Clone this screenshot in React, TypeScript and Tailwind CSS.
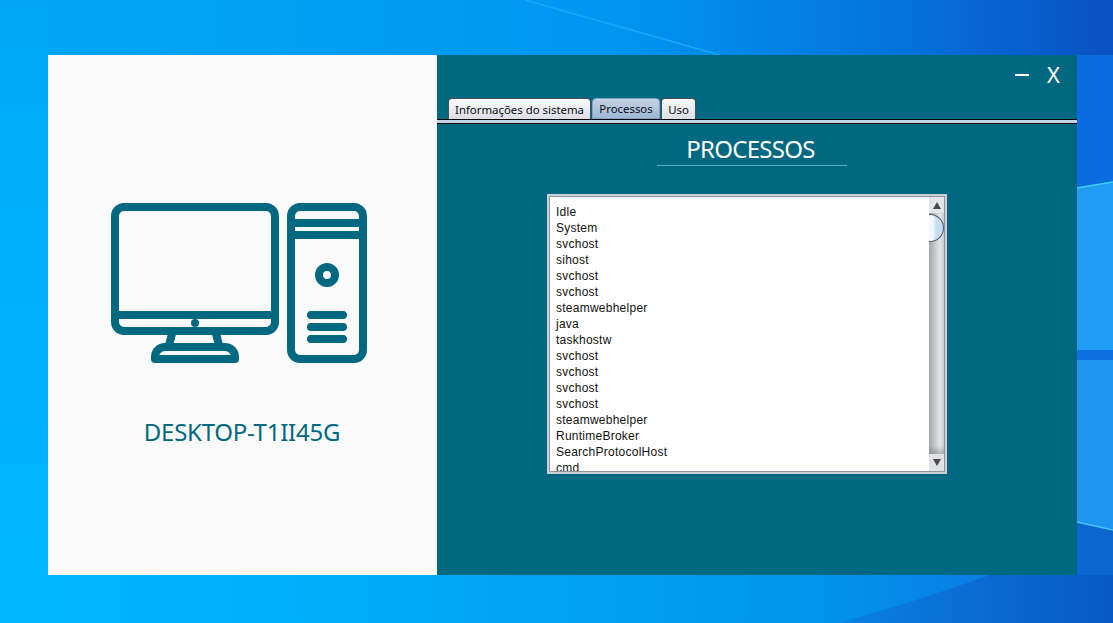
const processes = [
  'Idle',
  'System',
  'svchost',
  'sihost',
  'svchost',
  'svchost',
  'steamwebhelper',
  'java',
  'taskhostw',
  'svchost',
  'svchost',
  'svchost',
  'svchost',
  'steamwebhelper',
  'RuntimeBroker',
  'SearchProtocolHost',
  'cmd',
];

function Wallpaper() {
  return (
    <svg className="absolute inset-0" width="1113" height="623" viewBox="0 0 1113 623">
      <defs>
        <linearGradient id="top" x1="0" y1="0" x2="1" y2="0">
          <stop offset="0" stopColor="#00a8f6" />
          <stop offset="0.55" stopColor="#0096f2" />
          <stop offset="0.8" stopColor="#0574de" />
          <stop offset="1" stopColor="#0a50c4" />
        </linearGradient>
        <linearGradient id="bottom" x1="0" y1="0" x2="1" y2="0">
          <stop offset="0" stopColor="#00b8ff" />
          <stop offset="0.4" stopColor="#00a8f8" />
          <stop offset="0.72" stopColor="#0096ee" />
          <stop offset="0.88" stopColor="#0a7ee6" />
          <stop offset="1" stopColor="#0a6cd8" />
        </linearGradient>
        <linearGradient id="left" x1="0" y1="0" x2="0" y2="1">
          <stop offset="0" stopColor="#00a8f6" />
          <stop offset="1" stopColor="#00b8ff" />
        </linearGradient>
        <linearGradient id="corner" x1="0" y1="0" x2="1" y2="0">
          <stop offset="0" stopColor="#0a80e4" />
          <stop offset="1" stopColor="#0858c4" />
        </linearGradient>
      </defs>
      <rect width="1113" height="623" fill="url(#top)" />
      <rect y="575" width="1113" height="48" fill="url(#bottom)" />
      <rect width="48" height="623" fill="url(#left)" />
      <polygon points="1077,55 1113,55 1113,182 1077,188" fill="#0b6ce0" />
      <polygon points="1077,188 1113,182 1113,350 1077,350" fill="#1f9cf4" />
      <polygon points="1077,350 1113,350 1113,360 1077,360" fill="#0b6fe0" />
      <polygon points="1077,360 1113,360 1113,530 1077,522" fill="#2095f0" />
      <polygon points="1077,522 1113,530 1113,623 1077,623" fill="#0b66d2" />
      <path d="M 840 623 Q 920 600 990 575 H 1113 V 623 Z" fill="url(#corner)" />
      <line x1="525" y1="0" x2="720" y2="55" stroke="#1ea6fb" strokeWidth="1.5" />
      <line x1="1077" y1="188" x2="1113" y2="182" stroke="#3fd0f8" strokeWidth="1.5" />
      <line x1="1077" y1="522" x2="1113" y2="530" stroke="#3fc4f8" strokeWidth="1.5" />
    </svg>
  );
}

function ComputerIcon() {
  return (
    <svg width="256" height="160" viewBox="0 0 256 160" fill="none" stroke="#006880" strokeWidth="8" className="mr-[7px]">
      <rect x="4" y="4" width="160" height="124" rx="9" />
      <line x1="4" y1="112" x2="164" y2="112" />
      <circle cx="84" cy="120" r="4" fill="#006880" stroke="none" />
      <path d="M 61 131 L 58 142 M 105 131 L 108 142" />
      <path d="M 44 156 V 154 A 10 10 0 0 1 54 144 H 114 A 10 10 0 0 1 124 154 V 156 Z" strokeLinejoin="round" />
      <rect x="180" y="4" width="72" height="152" rx="9" />
      <line x1="180" y1="20" x2="252" y2="20" />
      <line x1="180" y1="32" x2="252" y2="32" />
      <circle cx="216" cy="72" r="8" />
      <path d="M 200 112 H 232 M 200 124 H 232 M 200 136 H 232" strokeLinecap="round" />
    </svg>
  );
}

function ProcessList() {
  return (
    <div className="flex h-[280px] w-[400px] border-2 border-[#ccd0d6]">
      <div className="flex min-w-0 flex-1 border border-[#8f96a0] bg-white">
        <ul className="flex-1 overflow-hidden pl-[6px] pt-[7px] font-['Liberation_Sans',sans-serif] text-[12px] leading-[16px] tracking-[0.25px] text-[#111111]">
          {processes.map((name, i) => (
            <li key={i}>{name}</li>
          ))}
        </ul>
        <div className="relative flex w-[15px] flex-col bg-[linear-gradient(90deg,#a2a4a8,#cfd0d3_50%,#e4e5e7_75%,#c8c9cc)]">
          <div className="flex h-[16px] items-center justify-center bg-[#e3e5e8]">
            <div className="h-0 w-0 border-x-[4px] border-b-[7px] border-x-transparent border-b-[#4a4a4a]" />
          </div>
          <div className="absolute left-0 top-[17px] h-[28px] w-[15px] rounded-r-[14px] border border-l-0 border-[#4a6078] bg-[linear-gradient(90deg,#f2f7fb,#f2f7fb_30%,#c6deef_50%)]" />
          <div className="flex-1" />
          <div className="h-[8px] bg-[linear-gradient(#0000,#6a6c7066)]" />
          <div className="flex h-[17px] items-center justify-center bg-[#e0e2e5]">
            <div className="h-0 w-0 border-x-[4px] border-t-[7px] border-x-transparent border-t-[#4a4a4a]" />
          </div>
        </div>
      </div>
    </div>
  );
}

export default function App() {
  return (
    <div className="relative h-[623px] w-[1113px] overflow-hidden bg-[#00a8f5] pl-[48px] pt-[55px]">
      <Wallpaper />
      <div className="relative flex h-[520px] w-[1029px]">
        {/* Left panel */}
        <div className="flex w-[389px] flex-col items-center bg-[#fafafa] pt-[148px]">
          <ComputerIcon />
          <p className="mr-[1px] mt-[53px] font-['Noto_Sans',sans-serif] text-[24px] leading-[32px] tracking-[-0.25px] text-[#006880]">
            DESKTOP-T1II45G
          </p>
        </div>

        {/* Right panel */}
        <div className="flex flex-1 flex-col bg-[#006880]">
          <div className="flex h-[43px] items-start justify-end pr-[17px] pt-[4px] font-['Noto_Sans',sans-serif] text-white">
            <span className="mr-[18px] mt-[15px] h-[2px] w-[14px] bg-white" />
            <span className="text-[22px] leading-[30px]">X</span>
          </div>

          {/* Tabs */}
          <div className="flex h-[21px] items-end gap-px pl-[11px] font-['Noto_Sans',sans-serif] text-[11.4px] text-[#0a0a14]">
            <div className="flex h-[21px] w-[143px] items-center justify-center rounded-t-[4px] border border-b-0 border-[#4a4f57] bg-[linear-gradient(#fafafb,#dcdee4)] pt-[2px]">
              Informações do sistema
            </div>
            <div className="flex h-[21px] w-[68px] items-center justify-center rounded-t-[4px] border border-[#7ea6cc] bg-[linear-gradient(#c5d3e4,#9fb8d4)] pt-[1px]">
              Processos
            </div>
            <div className="flex h-[21px] w-[35px] items-center justify-center rounded-t-[4px] border border-b-0 border-[#4a4f57] bg-[linear-gradient(#fafafb,#dcdee4)] pt-[2px]">
              Uso
            </div>
          </div>
          <div className="h-[5px] border-y border-black bg-[#c5d5e8]" />

          {/* Content */}
          <div className="flex flex-col items-center pr-[11px] pt-[10px]">
            <h1 className="w-[190px] border-b border-[#4fb0be] pb-[1px] pr-[2px] text-center font-['Noto_Sans',sans-serif] text-[24px] font-normal leading-[30px] tracking-[-0.7px] text-white">
              PROCESSOS
            </h1>
          </div>
          <div className="mt-[28px] pl-[110px]">
            <ProcessList />
          </div>
        </div>
      </div>
    </div>
  );
}
